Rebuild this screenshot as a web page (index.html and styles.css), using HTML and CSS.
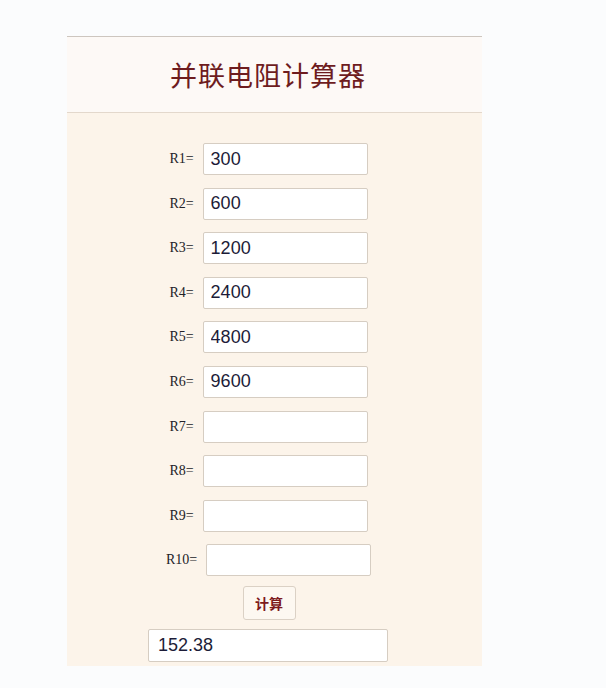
FILE: index.html
```html
<!DOCTYPE html>
<html lang="zh">
<head>
<meta charset="utf-8">
<title>并联电阻计算器</title>
<link rel="stylesheet" href="styles.css">
</head>
<body>
<div class="panel">
  <div class="header"><h1 class="title">并联电阻计算器</h1></div>
  <div class="form">
    <div class="row"><span class="lbl">R1=</span><input class="field" type="text" value="300"></div>
    <div class="row"><span class="lbl">R2=</span><input class="field" type="text" value="600"></div>
    <div class="row"><span class="lbl">R3=</span><input class="field" type="text" value="1200"></div>
    <div class="row"><span class="lbl">R4=</span><input class="field" type="text" value="2400"></div>
    <div class="row"><span class="lbl">R5=</span><input class="field" type="text" value="4800"></div>
    <div class="row"><span class="lbl">R6=</span><input class="field" type="text" value="9600"></div>
    <div class="row"><span class="lbl">R7=</span><input class="field" type="text" value=""></div>
    <div class="row"><span class="lbl">R8=</span><input class="field" type="text" value=""></div>
    <div class="row"><span class="lbl">R9=</span><input class="field" type="text" value=""></div>
    <div class="row row-last"><span class="lbl">R10=</span><input class="field" type="text" value=""></div>
    <div class="btn-row"><button class="calc" type="button">计算</button></div>
    <div class="result-row"><input class="result" type="text" value="152.38"></div>
  </div>
</div>
</body>
</html>
```
FILE: styles.css
```css
html, body {
  margin: 0;
  padding: 0;
  background: #fbfcfd;
}
body {
  padding-top: 36px;
}
.panel {
  width: 415px;
  margin-left: 67px;
  background: #fcf4ea;
  box-sizing: border-box;
  padding-bottom: 4px;
}
.header {
  height: 75px;
  border-top: 1px solid #cdc6bf;
  border-bottom: 1px solid #e3d8cc;
  background: #fdf9f6;
  display: flex;
  align-items: center;
  justify-content: center;
  padding-right: 13px;
}
.title {
  margin: 0;
  font-family: "Noto Sans CJK SC", sans-serif;
  font-weight: 400;
  font-size: 27px;
  color: #6e1c1e;
  letter-spacing: 1px;
}
.form {
  padding: 30px 13px 0 0;
}
.row {
  display: flex;
  align-items: center;
  justify-content: center;
  gap: 9px;
  height: 32px;
  margin-bottom: 12.6px;
}
.row-last {
  margin-bottom: 10px;
}
.lbl {
  font-family: "Liberation Serif", serif;
  font-size: 14px;
  color: #222228;
  padding-left: 1px;
}
.field, .result {
  box-sizing: border-box;
  width: 165px;
  height: 32px;
  border: 1px solid #d6cdc2;
  border-radius: 2px;
  background: #ffffff;
  font-family: "Liberation Sans", sans-serif;
  font-size: 18px;
  color: #1c1c38;
  padding: 0 7px;
  margin: 0;
  outline: none;
}
.btn-row {
  display: flex;
  justify-content: center;
  padding-left: 2px;
}
.calc {
  box-sizing: border-box;
  width: 53px;
  height: 34px;
  border: 1px solid #dbd1c5;
  border-radius: 3px;
  background: #fdf8f1;
  font-family: "Noto Sans CJK SC", sans-serif;
  font-weight: 700;
  font-size: 14px;
  color: #7e1a1c;
  padding: 0;
}
.result-row {
  display: flex;
  justify-content: center;
  margin-top: 9px;
}
.result {
  width: 240px;
  height: 33px;
  padding-left: 9px;
}
```
